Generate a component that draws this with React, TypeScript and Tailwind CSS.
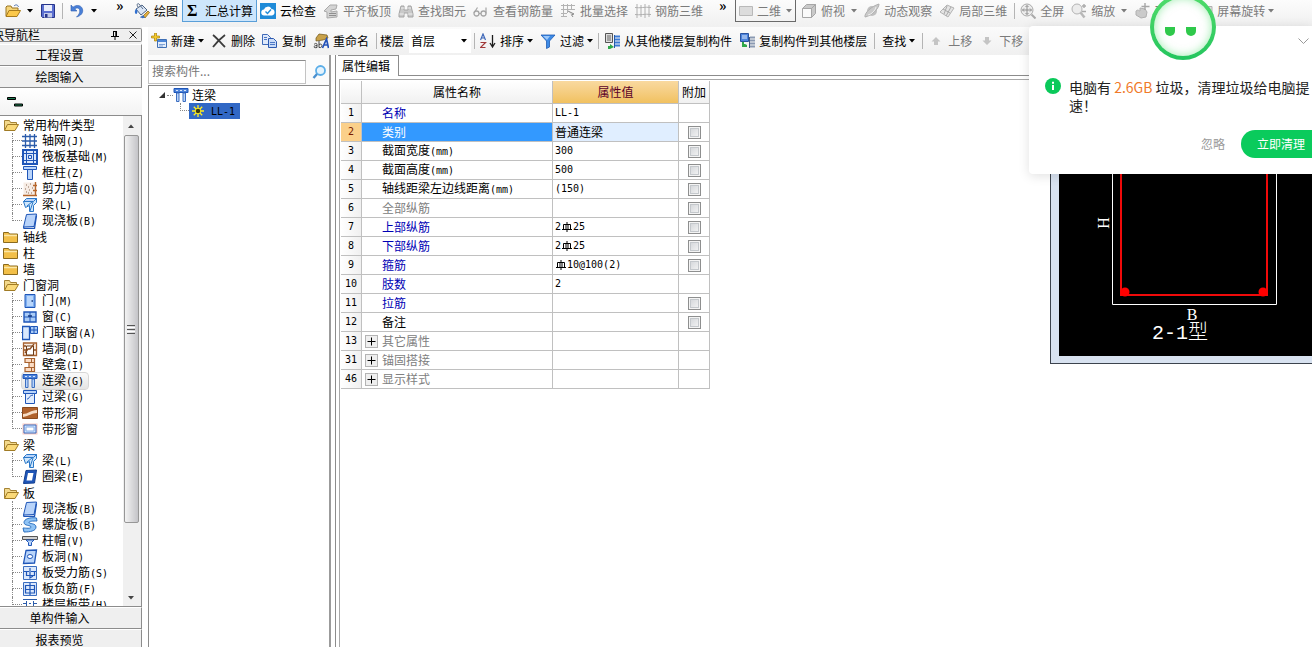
import React, { useState } from "react";
import clsx from "clsx";

/* ---------- small helpers ---------- */

// CJK glyphs are 12px, latin runs use a 6px wide mono face
function Mixed({ text }: { text: string }) {
  return (
    <>
      {text.split(/([ -~]+)/).map((part, i) =>
        /^[ -~]+$/.test(part) ? (
          <span key={i} className="font-['DejaVu_Sans_Mono',monospace] text-[10px] whitespace-pre">
            {part}
          </span>
        ) : (
          part
        )
      )}
    </>
  );
}

function Svg({ children, className }: { children: React.ReactNode; className?: string }) {
  return (
    <svg viewBox="0 0 16 16" fill="none" className={clsx("w-4 h-4 shrink-0", className)} aria-hidden="true">
      {children}
    </svg>
  );
}

function Caret({ className }: { className?: string }) {
  return (
    <svg viewBox="0 0 6 4" className={clsx("w-1.5 h-1 shrink-0", className)} aria-hidden="true">
      <path d="M0 0h6L3 3.5z" fill="currentColor" />
    </svg>
  );
}

function Sep({ className }: { className?: string }) {
  return <span className={clsx("w-px h-4 bg-[#b4b4b4] shrink-0", className)} />;
}

// rebar grade mark (circle, centre bar and foot)
function Rebar() {
  return (
    <svg viewBox="0 0 12 12" fill="none" stroke="#000" className="inline-block w-3 h-3 align-[-2px]" role="img" aria-label="HRB400">
      <path d="M2.500 3.500h7M2.500 3.500v5M9.500 3.500v5M6 1v10M1 8.500h10" />
      <path d="M4.500 3.500v5M7.500 3.500v5" strokeWidth=".5" />
    </svg>
  );
}

/* ---------- toolbar icons ---------- */

const tool: Record<string, React.ReactNode> = {
  open: (
    <Svg>
      <path d="M1 13V4l1-1h4l1 2h6v3" fill="#f5d57a" stroke="#9a7420" />
      <path d="M1 13.500 4 7.500h11.500L12 13.500z" fill="#fbc84a" stroke="#a87b1c" />
      <path d="M9 3c2-2 4-1 4.500 1" stroke="#4a6fae" />
    </Svg>
  ),
  save: (
    <Svg>
      <path d="M1.500 1.500h13v13h-12l-1-1z" fill="#5b6fd0" stroke="#26348a" />
      <path d="M4 2h8v6H4z" fill="#e9edfb" />
      <path d="M4 10h8v4.500H4z" fill="#c2c9e8" />
      <path d="M5 11h2.500v3.500H5z" fill="#26348a" />
    </Svg>
  ),
  undo: (
    <Svg>
      <path d="M2 2v6h6L5.800 6c2.200-2 5-.8 5 2 0 2-1 4-3.300 6C12 12.800 14 10 13.700 7 13.300 2.600 8 .9 4 4.200z" fill="#4a80d8" stroke="#2c5cb0" strokeWidth=".6" />
    </Svg>
  ),
  paint: (
    <Svg>
      <path d="M2 6 8 2l5 5-6 5z" fill="#dbe6f5" stroke="#4d6485" />
      <path d="M4 4C2 1 4 0 5 1l4 5" stroke="#5a6f8e" />
      <path d="M2 6C0 8 1 11 2 11s2-2 1-4" fill="#2f6fd0" />
      <path d="m9 13 5-5 1.500 1.500L11 15z" fill="#e5b13c" stroke="#7b5a14" strokeWidth=".7" />
      <path d="M6 14c2-1 3-2 4-1l1 1.500c-2 1-4 1-5-.5z" fill="#3a6fc0" />
    </Svg>
  ),
  cloud: (
    <Svg>
      <path d="M0 0h16v16H0z" fill="#1f8bd8" />
      <path d="M4.500 12.500a3 3 0 0 1-.5-6 4 4 0 0 1 7.500-.5 3.300 3.300 0 0 1 .5 6.500z" fill="#fff" />
      <path d="m5.500 8.500 2 2L11 6.500" stroke="#1f8bd8" strokeWidth="1.400" />
    </Svg>
  ),
  top: (
    <Svg>
      <path d="m1 8 6-6 7 0-1 4-5 1v2l6-1v6l-10 1v-6z" fill="#d4d4d4" stroke="#a9a9a9" />
      <path d="M6 10.500h7M6 12.500h7" stroke="#8f8f8f" />
    </Svg>
  ),
  binoc: (
    <Svg>
      <path d="M3 3h3v4h4V3h3l2 8v3h-5v-4H6v4H1v-3z" fill="#c9c9c9" stroke="#a4a4a4" />
      <path d="M3 5h3M10 5h3M1.500 11H6M10 11h4.500" stroke="#efefef" />
    </Svg>
  ),
  glasses: (
    <Svg>
      <circle cx="3.500" cy="10.500" r="2.500" stroke="#a6a6a6" strokeWidth="1.300" />
      <circle cx="10.500" cy="10.500" r="2.500" stroke="#a6a6a6" strokeWidth="1.300" />
      <path d="M1 10 4.500 4.500M13 10.500V4.500M6 10.500h2" stroke="#a6a6a6" strokeWidth="1.200" />
    </Svg>
  ),
  batch: (
    <Svg>
      <path d="M1 2.500h14M1 6.500h14M1 10.500h6M3.500 1v13M7.500 1v9M11.500 1v6M1 13.500h6" stroke="#b3b3b3" />
      <path d="m8 8 6 3-2.500.8L13 14" stroke="#8a8a8a" fill="#ddd" />
    </Svg>
  ),
  rebar3d: (
    <Svg>
      <path d="M2 1v14M6 2v12M10 1v14M14 2v12M0 4.500c5 1 10-1 16 0M0 11.500c5 1 10-1 16 0" stroke="#b0b0b0" />
    </Svg>
  ),
  flat: (
    <Svg>
      <path d="M1.500 3.500h13v9h-13z" fill="#dcdcdc" stroke="#b9b9b9" />
    </Svg>
  ),
  cube: (
    <Svg>
      <path d="M1.500 5.500h9v9h-9z" fill="#fafafa" stroke="#a6a6a6" />
      <path d="m1.500 5.500 4-4h9l-4 4zM10.500 14.500l4-4v-9l-4 4z" fill="#c9c9c9" stroke="#a6a6a6" />
    </Svg>
  ),
  orbit: (
    <Svg>
      <circle cx="8" cy="8" r="5" fill="#c0c0c0" />
      <path d="M1 14C0 10 8 3 15 1c0 5-8 12-14 13z" stroke="#b0b0b0" fill="#cacaca" />
      <path d="M4 12c4-1 7-4 8-8" stroke="#efefef" />
    </Svg>
  ),
  part3d: (
    <Svg>
      <path d="m1 9 7-7 7 3-6 9z" fill="#e4e4e4" stroke="#b4b4b4" />
      <path d="m4 6 7 4M8 3l-3 8M12 4l-5 9" stroke="#aaa" />
    </Svg>
  ),
  full: (
    <Svg>
      <circle cx="7" cy="7" r="6" fill="#ececec" stroke="#aaa" />
      <path d="M7 2.500v9M2.500 7h9M5.500 4 7 2.500 8.500 4M5.500 10 7 11.500 8.500 10M4 5.500 2.500 7 4 8.500M10 5.500 11.500 7 10 8.500" stroke="#909090" />
      <path d="m11.500 11.500 4 4" stroke="#aaa" strokeWidth="2" />
    </Svg>
  ),
  zoom: (
    <Svg>
      <circle cx="6" cy="6" r="5" fill="#ececec" stroke="#b4b4b4" />
      <path d="m9.500 9.500 4 5" stroke="#b8b8b8" strokeWidth="2.500" />
      <path d="M11 3h4M13 1v4M11 8.500h4" stroke="#aaa" strokeWidth="1.400" />
    </Svg>
  ),
  pan: (
    <Svg>
      <path d="M2 8c2-2 3 0 4 0V5l5 1 2 3-1 5-5 1-5-3z" fill="#cacaca" stroke="#b0b0b0" />
      <path d="M11 0v7M7.500 3.500h8" stroke="#a6a6a6" strokeWidth="1.400" />
    </Svg>
  ),
  rotate: (
    <Svg>
      <path d="M3 3.500h12v9H3z" fill="#ddd" stroke="#b0b0b0" />
    </Svg>
  ),
  create: (
    <Svg>
      <path d="M6.500 6.500h9v8h-9z" fill="#e4eefb" stroke="#3f6fb5" />
      <path d="M7 7h8v2H7z" fill="#4c86d8" />
      <path d="M8 11.500h6M8 13h4" stroke="#7ea2d6" />
      <path d="M3.500 0h2v3h3v2h-3v3h-2V5h-3V3h3z" fill="#f6cb2c" stroke="#a8810c" strokeWidth=".7" />
    </Svg>
  ),
  del: (
    <Svg>
      <path d="M2 2c4 3 8 8 12 12M14 2C10 5 5 10 2 14" stroke="#3c3c3c" strokeWidth="1.800" />
    </Svg>
  ),
  copy: (
    <Svg>
      <path d="M.5 1.500h5l3 3v7h-8z" fill="#dfe9fa" stroke="#3f6ab8" />
      <path d="M6.500 5.500h5l3 3v6h-8z" fill="#c9dbf7" stroke="#2c59b0" />
      <path d="M8 9.500h5M8 11.500h5M2 4.500h3M2 6.500h3" stroke="#4c78c6" />
    </Svg>
  ),
  rename: (
    <Svg>
      <path d="m3 5 3-4 8 1 1 3-5 2-7 1z" fill="#c9a24a" stroke="#6d5316" strokeWidth=".7" />
      <path d="M1 11.500c2-2 3-1 3 0v3c-4 1-4-2 0-2M6 8v6.500c4 1 4-5 0-3" stroke="#444" />
      <path d="m9.500 15 4-9 2 9M11 12h4" stroke="#2452b8" strokeWidth="1.700" />
    </Svg>
  ),
  sort: (
    <Svg>
      <path d="m.5 7 2.500-6 2.500 6M1.500 5h3" stroke="#3d67b8" strokeWidth="1.200" />
      <path d="M.5 9.500h5l-5 5h5" stroke="#a23a3a" strokeWidth="1.200" />
      <path d="M12.500 2v11M10 10l2.500 4 2.500-4" stroke="#1c1c1c" strokeWidth="1.300" />
    </Svg>
  ),
  filter: (
    <Svg>
      <path d="M1 2h14l-5.500 6v6l-3 1.500V8z" fill="#3d8be6" stroke="#1f5cb4" strokeWidth=".8" />
      <path d="M3 3h7L7 7z" fill="#9cc8fa" />
    </Svg>
  ),
  copyFrom: (
    <Svg>
      <path d="M1.500.5h7v9h-7z" fill="#dedede" stroke="#555" />
      <path d="M3 3h4M3 5h4M3 7h4" stroke="#666" />
      <path d="M4 10v3h2v-2l4 3-4 2H4" fill="#2fa84a" />
      <path d="M11 3.500h5M11 6.500h5M11 9.500h5M11 12.500h5" stroke="#3d7bd6" strokeWidth="2" />
      <path d="M10.500 2v13" stroke="#245aa8" />
    </Svg>
  ),
  copyTo: (
    <Svg>
      <path d="M1.500.5h8v8h-8z" fill="#4c84dc" stroke="#2a53a0" />
      <path d="M3 3h5M3 5h5" stroke="#dfe9fa" />
      <path d="M3 9v5h5v-2l-2-1H5V9" fill="#2fa84a" />
      <path d="M11 4.500h5M11 7.500h5M11 10.500h5M11 13.500h5" stroke="#8a99b2" strokeWidth="2" />
      <path d="M10.500 4v11" stroke="#3f587e" />
    </Svg>
  ),
  up: (
    <Svg>
      <path d="m8 4 4.500 4.500H10v3.500H6V8.500H3.500z" fill="#c4c4c4" />
    </Svg>
  ),
  down: (
    <Svg>
      <path d="m8 12 4.500-4.500H10V4H6v3.500H3.500z" fill="#c4c4c4" />
    </Svg>
  ),
};

function ToolButton({
  icon,
  label,
  caret,
  disabled,
  className,
}: {
  icon?: string;
  label: string;
  caret?: "near" | "far";
  disabled?: boolean;
  className?: string;
}) {
  return (
    <button
      type="button"
      disabled={disabled}
      className={clsx("flex items-center h-[22px] shrink-0", disabled ? "text-[#7b7b7b]" : "text-black", className)}
    >
      {icon && <span className="mr-1">{tool[icon]}</span>}
      {label}
      {caret && <Caret className={caret === "far" ? "ml-1.5" : "ml-[3px]"} />}
    </button>
  );
}

/* ---------- component tree icons ---------- */

const B = "#1f56b8";
const L = "#b9d4fa";

const treeIcons: Record<string, React.ReactNode> = {
  open: (
    <Svg>
      <path d="M1.500 13V3.500h5l1 2h6v2" fill="#f3d98c" stroke="#a58334" />
      <path d="m1.500 13.500 3-6h11l-3.500 6z" fill="#fad978" stroke="#a07b25" />
    </Svg>
  ),
  folder: (
    <Svg>
      <path d="M.5 13.500v-10h5l1 1.500h8v8.500z" fill="#f2bf48" stroke="#8a6a1e" />
      <path d="M1 6.500h13" stroke="#fbe7a6" strokeWidth="1.500" />
    </Svg>
  ),
  grid: (
    <Svg>
      <path d="M3.500 1v14M8 1v14M12.500 1v14M0 3.500h15M0 8h15M0 12.500h15" stroke="#2b5cab" strokeWidth="1.300" />
    </Svg>
  ),
  raft: (
    <Svg>
      <path d="M1 1h14v14H1z" fill="#dbe8fb" stroke={B} strokeWidth="2" />
      <path d="M4.500 2v12M11.500 2v12M2 4.500h12M2 11.500h12M6.500 6.500h3v3h-3z" stroke={B} />
    </Svg>
  ),
  column: (
    <Svg>
      <path d="M1.500 1.500h13v3h-13z" fill={L} stroke={B} />
      <path d="M5.500 4.500h5v10h-5z" fill={L} stroke={B} />
    </Svg>
  ),
  shear: (
    <Svg>
      <path d="M1.500 1.500h12v13h-12z" fill="#f6ece4" />
      <path d="M1 14.500h14M13.500 1v14M11 4.500h4M11 9.500h4" stroke="#b5652a" strokeWidth="1.400" />
      <path d="M4 4h1M8 3h1M6 6h1M10 7h1M3 8h1M7 9h1M4 11h1M9 12h1M6 12h1" stroke="#8c6a55" />
    </Svg>
  ),
  beam: (
    <Svg>
      <path d="m1.500 4.500 3-3h10l-3 3z" fill={L} stroke="#2a78c8" />
      <path d="M1.500 4.500h10l3-3v4l-3 3v6h-4v-6l-4 2z" fill="#cfe6fb" stroke="#2a78c8" />
      <path d="m5 9 5-4M8 14l3-9" stroke="#2a78c8" />
    </Svg>
  ),
  slab: (
    <Svg>
      <path d="m4.500 1.500 10-.5-2.500 12.500-10.500.5z" fill={L} stroke={B} />
      <path d="m1.500 14 .5 1.500h10.500l2-13" stroke={B} strokeWidth="1.300" />
    </Svg>
  ),
  door: (
    <Svg>
      <path d="M3 1.500h10v13H3z" fill="#7fb0f2" stroke={B} />
      <path d="M5 3h6v10H5z" fill="#b9d6fb" />
      <path d="M9.500 8h1.500" stroke="#12367c" strokeWidth="1.500" />
    </Svg>
  ),
  window: (
    <Svg>
      <path d="M2 3h12v10H2z" fill="#a9cbf7" stroke={B} strokeWidth="1.400" />
      <path d="M8 3v10M2 8h12" stroke={B} />
      <path d="M6 7h4" stroke="#12367c" strokeWidth="1.500" />
    </Svg>
  ),
  doorwin: (
    <Svg>
      <path d="M.5 1.500h7v13h-7z" fill="#d9e8fd" stroke={B} strokeWidth="1.300" />
      <path d="M8.500 1.500h7v7h-7zM12 1.500v7M8.500 5h7" fill="#a9cbf7" stroke={B} />
    </Svg>
  ),
  wallhole: (
    <Svg>
      <path d="M1.500 2h13v12.500h-13z" fill="#fbeee4" stroke="#a8622f" strokeWidth="1.300" />
      <path d="M4.500 5h7v9h-7z" fill="#fff" stroke="#6d3d19" />
      <path d="m3 12 3-4h2l4-5M2 5h2M2 9h2M12 9h2" stroke="#8b4c20" strokeWidth="1.300" />
    </Svg>
  ),
  niche: (
    <Svg>
      <path d="M3 1.500h9.500v13H3v-4h4v-5H3z" fill="#fbdcc4" stroke="#a8622f" strokeWidth="1.200" />
      <path d="M7 5.500h5M7 10.500h5M9.500 1.500v4M9.500 10.500v4" stroke="#a8622f" />
    </Svg>
  ),
  link: (
    <Svg>
      <path d="M1 1.500h14v4H1z" fill="#4d83da" stroke={B} />
      <path d="M3 3.500h2M7 3.500h2M11 3.500h2" stroke="#dbe8fb" />
      <path d="M3.500 6h2.500v8.500H3.500zM10 6h2.500v8.500H10z" fill={L} stroke="#3c6ec0" />
    </Svg>
  ),
  lintel: (
    <Svg>
      <path d="M1.500 1.500h13v3h-13z" fill={L} stroke={B} />
      <path d="M3.500 4.500h9v10h-9z" fill="#e2edfd" stroke={B} />
      <path d="M5 10c3 0 1-3 6-4" stroke={B} />
    </Svg>
  ),
  striphole: (
    <Svg>
      <path d="M.5 2.500h15v11H.5z" fill="#b0622c" stroke="#8a4a1e" />
      <path d="M1 9c5 0 8-4 14-4v3c-5 0-8 3-14 4z" fill="#f6ddc6" />
    </Svg>
  ),
  stripwin: (
    <Svg>
      <path d="M.5 2.500h15v11H.5z" fill="#f4c9c2" />
      <path d="M2 4h12v8H2z" fill="#cfe2fc" stroke="#3c6ec0" />
      <path d="M4 6h8v4H4z" fill="#fff" stroke="#86aee8" />
    </Svg>
  ),
  ring: (
    <Svg>
      <path d="m4 1.500 10.500-.5-2 13-11 .5z" fill={B} stroke="#123f91" />
      <path d="M6 4h5.500l-1.500 7.500H4.500z" fill="#fff" />
    </Svg>
  ),
  spiral: (
    <Svg>
      <path d="M14.500 1C8 0 2 2 2 5.500S9 8 9 10s-5 1-8 1l1 4c6 0 12-1 12-5S7 7 7 5.500 11 4 15 4z" fill="#8fc3f5" stroke="#2a6fc0" />
    </Svg>
  ),
  cap: (
    <Svg>
      <path d="M.5 3.500h15v3H.5z" fill="#d0d0d0" stroke="#555" />
      <path d="M4 7h8l-2.500 2.500v3h-3v-3z" fill={L} stroke={B} />
    </Svg>
  ),
  slabhole: (
    <Svg>
      <path d="m4 1.500 10.500-.5-2 13-11 .5z" fill={L} stroke={B} strokeWidth="1.300" />
      <ellipse cx="8" cy="7.500" rx="2.600" ry="2" fill="#fff" stroke={B} />
    </Svg>
  ),
  force: (
    <Svg>
      <path d="M1.500 1.500h13v13h-13z" fill="#dbe8fb" stroke="#3c6ec0" />
      <path d="M2 6.500h5M4.500 6.500v4h8v-4M8 3v10l3-2M9 6.500h5" stroke={B} strokeWidth="1.200" />
    </Svg>
  ),
  negative: (
    <Svg>
      <path d="M1.500 1.500h13v13h-13z" fill="#dbe8fb" stroke="#3c6ec0" />
      <path d="M3.500 12V4.500h9V12M3.500 8.500h9M8 2v12M3 12h10" stroke={B} strokeWidth="1.200" />
    </Svg>
  ),
  strip: (
    <Svg>
      <path d="M1 2.500h14M4.500 4v11M11.500 4v11M1 6.500h3M7 6.500h2M12 6.500h3" stroke="#2b5cab" />
    </Svg>
  ),
};

type Group = { label: string; open?: boolean; items?: [string, string][] };

const groups: Group[] = [
  {
    label: "常用构件类型",
    open: true,
    items: [
      ["grid", "轴网(J)"],
      ["raft", "筏板基础(M)"],
      ["column", "框柱(Z)"],
      ["shear", "剪力墙(Q)"],
      ["beam", "梁(L)"],
      ["slab", "现浇板(B)"],
    ],
  },
  { label: "轴线" },
  { label: "柱" },
  { label: "墙" },
  {
    label: "门窗洞",
    open: true,
    items: [
      ["door", "门(M)"],
      ["window", "窗(C)"],
      ["doorwin", "门联窗(A)"],
      ["wallhole", "墙洞(D)"],
      ["niche", "壁龛(I)"],
      ["link", "连梁(G)"],
      ["lintel", "过梁(G)"],
      ["striphole", "带形洞"],
      ["stripwin", "带形窗"],
    ],
  },
  {
    label: "梁",
    open: true,
    items: [
      ["beam", "梁(L)"],
      ["ring", "圈梁(E)"],
    ],
  },
  {
    label: "板",
    open: true,
    items: [
      ["slab", "现浇板(B)"],
      ["spiral", "螺旋板(B)"],
      ["cap", "柱帽(V)"],
      ["slabhole", "板洞(N)"],
      ["force", "板受力筋(S)"],
      ["negative", "板负筋(F)"],
      ["strip", "楼层板带(H)"],
    ],
  },
];

function TreeGroup({ group, selected, onSelect }: { group: Group; selected: string; onSelect: (s: string) => void }) {
  const items = group.items ?? [];
  return (
    <li>
      <button type="button" className="flex items-center h-4 pl-[3px]">
        {group.open ? treeIcons.open : treeIcons.folder}
        <span className="ml-1">{group.label}</span>
      </button>
      <ul>
        {items.map(([icon, label], i) => (
          <li key={label} className="flex h-4 pl-3">
            <span className="flex flex-col w-2.5 shrink-0">
              <span className="h-2 border-l border-b border-dotted border-[#888]" />
              {i < items.length - 1 && <span className="h-2 border-l border-dotted border-[#888]" />}
            </span>
            <button
              type="button"
              onClick={() => onSelect(label)}
              className={clsx(
                "flex items-center h-4 pr-1 rounded-[3px]",
                selected === label && "bg-linear-to-b from-[#fafafa] to-[#e4e4e4] outline outline-[#d6d6d6]"
              )}
            >
              {treeIcons[icon]}
              <span className="ml-1">
                <Mixed text={label} />
              </span>
            </button>
          </li>
        ))}
      </ul>
    </li>
  );
}

function NavTab({ label, className }: { label: string; className?: string }) {
  return (
    <button
      type="button"
      className={clsx(
        "h-[22px] shrink-0 pr-[22px] text-center bg-[#efefef] border-t border-t-white border-b border-r border-[#8c8c8c]",
        className
      )}
    >
      {label}
    </button>
  );
}

function NavPanel() {
  const [selected, setSelected] = useState("连梁(G)");
  return (
    <aside className="w-[142px] shrink-0 flex flex-col pt-px bg-[#f3f3f3] overflow-hidden">
      <div className="flex items-center h-3.5 shrink-0 border border-l-0 border-[#8c8c8c] rounded-r-[2px] bg-[#efefef] overflow-hidden">
        <span className="-ml-2 flex-1 leading-3">块导航栏</span>
        <button type="button" aria-label="固定" className="mr-2.5">
          <svg viewBox="0 0 8 9" className="w-2 h-[9px]" fill="none" stroke="#000">
            <path d="M2 .5h4M2.500 0v5M5.500 0v5M4.800 0v5M0 5.500h8M4 6v3" />
          </svg>
        </button>
        <button type="button" aria-label="关闭" className="mr-1">
          <svg viewBox="0 0 8 8" className="w-2 h-2" fill="none" stroke="#222">
            <path d="m.5.5 7 7M7.500.5l-7 7" />
          </svg>
        </button>
      </div>
      <NavTab label="工程设置" className="mt-0.5" />
      <NavTab label="绘图输入" />
      <div className="h-[27px] shrink-0 pt-2 pl-[7px] bg-linear-to-b from-white to-[#f3f3f3]">
        <svg viewBox="0 0 16 12" className="w-4 h-3" fill="#1d7a4f" stroke="#000">
          <path d="M.5 1.500h8v2h-8zM7.500 8h8v2h-8z" />
        </svg>
      </div>
      <div className="flex flex-1 min-h-0 bg-white border-t border-r border-b border-[#8c8c8c]">
        <ul className="flex-1 min-w-0 pt-px overflow-hidden leading-4 whitespace-nowrap">
          {groups.map((g) => (
            <TreeGroup key={g.label} group={g} selected={selected} onSelect={setSelected} />
          ))}
        </ul>
        <div className="w-[18px] shrink-0 flex flex-col items-center pr-0.5 bg-[#f0f0f0]">
          <span className="h-[19px] flex items-center">
            <Caret className="rotate-180 text-[#444]" />
          </span>
          <div className="flex-[387] w-[15px] flex flex-col items-center justify-center gap-px border border-[#979797] rounded-[2px] bg-linear-to-r from-[#f3f3f3] to-[#c4c4c8]">
            <span className="w-2 h-px bg-[#555]" />
            <span className="w-2 h-px bg-white" />
            <span className="w-2 h-px bg-[#555]" />
            <span className="w-2 h-px bg-white" />
            <span className="w-2 h-px bg-[#555]" />
          </div>
          <span className="flex-[66]" />
          <span className="h-[17px] flex items-center">
            <Caret className="text-[#444]" />
          </span>
        </div>
      </div>
      <NavTab label="单构件输入" />
      <NavTab label="报表预览" className="-mb-1" />
    </aside>
  );
}

/* ---------- component list ---------- */

function ComponentList() {
  return (
    <section className="w-[183px] shrink-0 flex flex-col border-r-2 border-[#9b9b9b] bg-white">
      <div className="flex items-center h-[30px] shrink-0 pt-1 bg-[#fbfbfb]">
        <input
          type="text"
          aria-label="搜索构件"
          placeholder="搜索构件..."
          className="w-[158px] h-6 pl-[3px] pb-1 bg-white border border-[#c3c3c3] border-t-[#8c8c8c] text-xs placeholder:text-[#777] outline-none"
        />
        <button type="button" aria-label="搜索" className="ml-1.5">
          <Svg>
            <circle cx="8.500" cy="6.500" r="4.500" fill="#e4f3fd" stroke="#5caee8" strokeWidth="1.800" />
            <path d="m5 10-3.500 4" stroke="#4a90cf" strokeWidth="2.400" />
          </Svg>
        </button>
      </div>
      <div className="flex-1 border-t border-l border-[#8c8c8c] pt-px leading-4">
        <div className="flex items-center h-4 pl-2.5">
          <svg viewBox="0 0 6 6" className="w-1.5 h-1.5">
            <path d="M6 0v6H0z" fill="#333" />
          </svg>
          <span className="w-1.5 ml-0.5 border-t border-dotted border-[#888]" />
          {treeIcons.link}
          <span className="ml-[3px]">连梁</span>
        </div>
        <div className="flex h-4 pl-[31px]">
          <span className="w-[9px] h-2 border-l border-b border-dotted border-[#888]" />
          <button type="button" className="flex items-center h-4 w-[51px] pl-[3px] bg-[#3168c5]">
            <svg viewBox="0 0 12 12" className="w-3 h-3" fill="none" stroke="#ffee22">
              <path d="M6 0v12M0 6h12M1.800 1.800l8.400 8.400M10.200 1.800l-8.400 8.400" strokeWidth="1.300" />
              <circle cx="6" cy="6" r="2.800" fill="#3a3a10" />
            </svg>
            <span className="ml-[7px]">
              <Mixed text="LL-1" />
            </span>
          </button>
        </div>
      </div>
    </section>
  );
}

/* ---------- property grid ---------- */

type Row = { no: number; name: string; value?: React.ReactNode; color?: string; check?: boolean; expand?: boolean };

const BLUE = "text-[#0000b4]";
const GRAY = "text-[#808080]";

const rows: Row[] = [
  { no: 1, name: "名称", value: <Mixed text="LL-1" />, color: BLUE },
  { no: 2, name: "类别", value: "普通连梁", check: true },
  { no: 3, name: "截面宽度(mm)", value: <Mixed text="300" />, check: true },
  { no: 4, name: "截面高度(mm)", value: <Mixed text="500" />, check: true },
  { no: 5, name: "轴线距梁左边线距离(mm)", value: <Mixed text="(150)" />, check: true },
  { no: 6, name: "全部纵筋", color: GRAY, check: true },
  { no: 7, name: "上部纵筋", value: <><Mixed text="2" /><Rebar /><Mixed text="25" /></>, color: BLUE, check: true },
  { no: 8, name: "下部纵筋", value: <><Mixed text="2" /><Rebar /><Mixed text="25" /></>, color: BLUE, check: true },
  { no: 9, name: "箍筋", value: <><Rebar /><Mixed text="10@100(2)" /></>, color: BLUE, check: true },
  { no: 10, name: "肢数", value: <Mixed text="2" />, color: BLUE },
  { no: 11, name: "拉筋", color: BLUE, check: true },
  { no: 12, name: "备注", check: true },
  { no: 13, name: "其它属性", color: GRAY, expand: true },
  { no: 31, name: "锚固搭接", color: GRAY, expand: true },
  { no: 46, name: "显示样式", color: GRAY, expand: true },
];

function PropertyTable() {
  const active = 2;
  return (
    <table className="table-fixed w-[369px] border-separate border-spacing-0 leading-[18px] whitespace-nowrap [&_td]:p-0 [&_td]:border-r [&_td]:border-b [&_td]:border-[#c0c0c0] [&_th]:p-0 [&_th]:border-r [&_th]:border-b [&_th]:border-[#c0c0c0] [&_th]:font-normal">
      <colgroup>
        <col className="w-[21px]" />
        <col className="w-[191px]" />
        <col className="w-[126px]" />
        <col className="w-[31px]" />
      </colgroup>
      <thead>
        <tr className="h-[23px] bg-linear-to-b from-white to-[#f0f0f0]">
          <th />
          <th>属性名称</th>
          <th className="bg-linear-to-b from-[#f9d99f] to-[#f1c15f] text-[#5a0028]">属性值</th>
          <th>附加</th>
        </tr>
      </thead>
      <tbody>
        {rows.map((r) => {
          const on = r.no === active;
          return (
            <tr key={r.no} className="h-[19px]">
              <th className={clsx("text-center", on ? "bg-[#fbd08a] text-[#7a1c00]" : "bg-linear-to-r from-white to-[#f0f0f0]")}>
                <div className="flex items-center justify-center h-[18px]">
                  <Mixed text={String(r.no)} />
                </div>
              </th>
              <td className={clsx(on ? "bg-[#3399ff] text-white" : r.color)}>
                <div className="flex items-center h-[18px]">
                  <span className="w-5 pl-[3px] flex shrink-0">
                    {r.expand && (
                      <button type="button" aria-label={"展开" + r.name} className="w-[13px] h-[13px] border border-[#b4b4b4] bg-[#efefef]">
                        <svg viewBox="0 0 11 11" className="w-[11px] h-[11px]" fill="none" stroke="#000">
                          <path d="M5.500 1.500v8M1.500 5.500h8" />
                        </svg>
                      </button>
                    )}
                  </span>
                  <span>
                    <Mixed text={r.name} />
                  </span>
                </div>
              </td>
              <td className={clsx(on && "bg-[#e0eeff]")}>
                <div className="flex items-center h-[18px] pl-0.5">{r.value}</div>
              </td>
              <td>
                {r.check && (
                  <input
                    type="checkbox"
                    aria-label={r.name + " 附加"}
                    className="appearance-none block mx-auto w-[13px] h-[13px] border border-[#8e8f8f] bg-linear-to-br from-[#cfd2d6] to-[#f8f8f8] shadow-[inset_0_0_0_1px_#f4f4f4,inset_0_0_0_2px_#c4c8cc] checked:bg-[#3399ff]"
                  />
                )}
              </td>
            </tr>
          );
        })}
      </tbody>
    </table>
  );
}

function PropertyPanel() {
  return (
    <section className="flex-1 min-w-0 flex flex-col ml-1 border-l border-[#8c8c8c] bg-white">
      <div className="flex h-[21px] shrink-0 pl-0.5">
        <button type="button" className="w-[61px] pr-1 border-t border-r border-[#8c8c8c] bg-white">
          属性编辑
        </button>
        <span className="flex-1 border-b border-[#8c8c8c]" />
      </div>
      <div className="flex-1 mt-[3px] ml-[3px] pt-px pl-px border-t border-l border-[#a8a8a8]">
        <PropertyTable />
      </div>
    </section>
  );
}

/* ---------- floating windows ---------- */

// section preview of the beam, docked to the right edge
function SectionPreview() {
  return (
    <div className="absolute right-0 top-[100px] w-[262px] h-[264px] pl-2 pb-[7px] bg-[#d8e2f0] border-l border-b border-[#3c434d]">
      <svg viewBox="0 0 253 256" className="w-[253px] h-64 bg-black" fill="none" role="img" aria-label="2-1型 截面">
        <path d="M53.500 0v204.500h164V0" stroke="#fff" />
        <path d="M62 0v195h146V0" stroke="#f00a0a" strokeWidth="2" />
        <circle cx="66" cy="192" r="4.500" fill="#f00" />
        <circle cx="204" cy="192" r="4.500" fill="#f00" />
        <g fill="#fff" textAnchor="middle" className="font-['Liberation_Mono','Noto_Sans_CJK_SC',monospace]">
          <text transform="translate(50 123) rotate(-90)" className="text-base font-['Liberation_Serif',serif]">H</text>
          <text x="133" y="220" className="text-base font-['Liberation_Serif',serif]">B</text>
          <text x="121" y="239" className="text-xl font-light">2-1型</text>
        </g>
      </svg>
    </div>
  );
}

function CleanupPopup() {
  return (
    <div className="absolute right-0 top-[26px] w-[283px] h-[148px] bg-white rounded-l shadow-[0_2px_12px_rgba(0,0,0,0.12)]">
      <div className="absolute left-[121px] -top-8 w-[66px] h-[66px] rounded-full bg-linear-to-b from-[#4fdc6a] to-[#22c55e] p-1">
        <div className="flex items-center justify-center gap-[11px] w-full h-full pt-2 pr-1.5 rounded-full bg-white shadow-[inset_0_0_10px_rgba(80,220,110,0.55)]">
          <span className="w-2.5 h-[9px] rounded-b-full rounded-tr-sm rounded-tl-lg bg-[#2fc94b]" />
          <span className="w-2.5 h-[9px] rounded-b-full rounded-tl-sm rounded-tr-lg bg-[#2fc94b]" />
        </div>
      </div>
      <button type="button" aria-label="收起" className="absolute right-[3px] top-3">
        <svg viewBox="0 0 11 7" className="w-[11px] h-[7px]" fill="none" stroke="#999">
          <path d="m.5.5 5 5 5-5" />
        </svg>
      </button>
      <div className="flex pt-[52px] pl-4">
        <Svg>
          <circle cx="8" cy="8" r="8" fill="#0ac95a" />
          <path d="M7 7h2v5H7zM7 3.800h2v2H7z" fill="#fff" />
        </Svg>
        <p className="ml-2 text-sm leading-[18px] text-[#222] whitespace-nowrap">
          电脑有 <span className="text-[#f07a2a]">2.6GB</span> 垃圾，清理垃圾给电脑提
          <br />
          速！
        </p>
      </div>
      <div className="flex justify-end items-center gap-4 mt-4">
        <button type="button" className="text-[#9a9a9a]">
          忽略
        </button>
        <button type="button" className="h-7 pl-4 pr-[7px] rounded-l-full bg-[#0acb5c] text-white">
          立即清理
        </button>
      </div>
    </div>
  );
}

/* ---------- toolbars ---------- */

function MainToolbar() {
  return (
    <div className="flex h-[27px] shrink-0 pl-[5px] bg-linear-to-b from-[#fcfcfc] to-[#f0f0f0] whitespace-nowrap overflow-hidden">
      <div className="flex items-center h-[22px] shrink-0">
        <button type="button" aria-label="打开" className="flex items-center gap-1.5">
          {tool.open}
          <Caret />
        </button>
        <button type="button" aria-label="保存" className="ml-[7px] mr-1.5">
          {tool.save}
        </button>
        <Sep />
        <button type="button" aria-label="撤销" className="flex items-center gap-1.5 ml-1.5">
          {tool.undo}
          <Caret />
        </button>
        <span className="ml-[19px] mb-3 w-[18px] text-sm leading-3 font-bold">»</span>
        <ToolButton icon="paint" label="绘图" />
        <button type="button" className="flex items-center h-[22px] w-[75px] ml-1 mr-[3px] pl-1 bg-[#cde6fc] border border-t-0 border-[#5a9fd8]">
          <span className="w-[18px] text-left font-['Liberation_Serif',serif] text-base font-bold">Σ</span>
          汇总计算
        </button>
      </div>
      <div className="flex items-center gap-[7px] h-[22px] shrink-0">
        <ToolButton icon="cloud" label="云检查" />
        <ToolButton icon="top" label="平齐板顶" disabled />
        <ToolButton icon="binoc" label="查找图元" disabled />
        <ToolButton icon="glasses" label="查看钢筋量" disabled />
        <ToolButton icon="batch" label="批量选择" disabled />
        <ToolButton icon="rebar3d" label="钢筋三维" disabled />
      </div>
      <span className="ml-4 w-4 shrink-0 text-sm leading-[10px] font-bold">»</span>
      <label className="flex items-center h-[22px] w-[61px] shrink-0 mr-[5px] pl-0.5 pr-[3px] border border-t-0 border-[#6a6a6a] text-[#7b7b7b]">
        {tool.flat}
        <select aria-label="视图" disabled className="appearance-none w-8 ml-[3px] flex-1 bg-transparent">
          <option>二维</option>
          <option>三维</option>
        </select>
        <Caret />
      </label>
      <div className="flex items-center gap-[7px] h-[22px] shrink-0">
        <ToolButton icon="cube" label="俯视" caret="far" disabled />
        <ToolButton icon="orbit" label="动态观察" disabled />
        <ToolButton icon="part3d" label="局部三维" disabled />
        <Sep className="-mr-0.5" />
        <ToolButton icon="full" label="全屏" disabled />
        <ToolButton icon="zoom" label="缩放" caret="far" disabled />
        <ToolButton icon="pan" label="平移" caret="far" disabled />
        <ToolButton icon="rotate" label="屏幕旋转" caret="near" disabled />
      </div>
    </div>
  );
}

function EditToolbar() {
  return (
    <div className="flex items-center gap-[7px] h-7 shrink-0 pl-[3px] bg-linear-to-b from-[#fbfbfb] to-[#f0f0f0] whitespace-nowrap overflow-hidden">
      <ToolButton icon="create" label="新建" caret="near" />
      <ToolButton icon="del" label="删除" />
      <ToolButton icon="copy" label="复制" />
      <ToolButton icon="rename" label="重命名" />
      <div className="flex items-center gap-[3px] shrink-0 -mr-0.5">
        <Sep />
        <label htmlFor="floor">楼层</label>
        <div className="flex items-center ml-0.5 w-[62px] h-6 pl-0.5 pr-1 bg-white">
          <select id="floor" className="appearance-none flex-1 w-10 bg-transparent outline-none">
            <option>首层</option>
            <option>第2层</option>
          </select>
          <Caret />
        </div>
        <Sep />
      </div>
      <ToolButton icon="sort" label="排序" caret="near" />
      <ToolButton icon="filter" label="过滤" caret="near" />
      <Sep className="-mx-0.5" />
      <ToolButton icon="copyFrom" label="从其他楼层复制构件" />
      <ToolButton icon="copyTo" label="复制构件到其他楼层" />
      <Sep />
      <ToolButton label="查找" caret="near" />
      <Sep className="-mr-0.5" />
      <ToolButton icon="up" label="上移" disabled />
      <ToolButton icon="down" label="下移" disabled />
    </div>
  );
}

export default function App() {
  return (
    <div className="relative flex flex-col h-screen overflow-hidden bg-white text-black text-xs font-['Noto_Sans_CJK_SC',sans-serif]">
      <MainToolbar />
      <div className="flex flex-1 min-h-0">
        <NavPanel />
        <main className="flex-1 min-w-0 flex flex-col ml-1.5">
          <EditToolbar />
          <div className="flex flex-1 min-h-0">
            <ComponentList />
            <PropertyPanel />
          </div>
        </main>
      </div>
      <SectionPreview />
      <CleanupPopup />
    </div>
  );
}
